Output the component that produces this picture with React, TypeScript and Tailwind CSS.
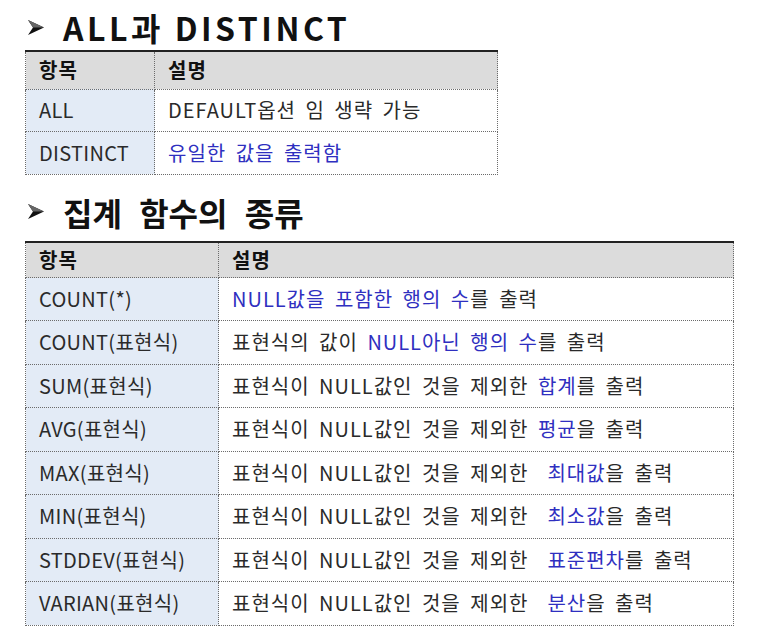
import React from "react";

type Part = { t: string; blue?: boolean };

const font = { fontFamily: '"Noto Sans CJK KR", "Noto Sans", sans-serif' };

function Arrow() {
  return (
    <svg width="18" height="17" viewBox="0 0 18 17" className="shrink-0">
      <path d="M1 1 L17 8.5 L1 16 L6 8.5 Z" fill="#111" />
      <path d="M1 1 L17 8.5 L6 8.5 Z" fill="#666" />
    </svg>
  );
}

function Title({ children, className = "" }: { children: React.ReactNode; className?: string }) {
  return (
    <div className={`flex items-center gap-[18px] pl-[27px] ${className}`}>
      <Arrow />
      <h2 className="text-[32px] font-bold leading-none text-[#111]">{children}</h2>
    </div>
  );
}

function Table({
  rows,
  col1,
  width,
  headerH,
  rowH,
}: {
  rows: { name: string; desc: Part[] }[];
  col1: number;
  width: number;
  headerH: number;
  rowH: number[];
}) {
  const cell = "border border-dotted border-[#6b6b6b] px-[13px] text-left align-middle";
  const head = `${cell} border-t-2 border-t-[#222] [border-top-style:solid] font-bold text-[#111]`;
  return (
    <table
      className="ml-[25px] border-collapse text-[20px] text-[#2a2a2a] tracking-[1px] [word-spacing:4px]"
      style={{ width }}
    >
      <colgroup>
        <col style={{ width: col1 }} />
        <col />
      </colgroup>
      <thead>
        <tr className="bg-[#dcdcdc]" style={{ height: headerH }}>
          <th className={head}>항목</th>
          <th className={head}>설명</th>
        </tr>
      </thead>
      <tbody>
        {rows.map((r, i) => (
          <tr key={r.name} style={{ height: rowH[i] }}>
            <td className={`${cell} bg-[#e3ebf6] tracking-[0.3px]`}>{r.name}</td>
            <td className={`${cell} bg-white whitespace-pre`}>
              {r.desc.map((p, j) => (
                <span key={j} className={p.blue ? "text-[#2f2fc0]" : ""}>
                  {p.t}
                </span>
              ))}
            </td>
          </tr>
        ))}
      </tbody>
    </table>
  );
}

const t1 = [
  { name: "ALL", desc: [{ t: "DEFAULT옵션 임 생략 가능" }] },
  { name: "DISTINCT", desc: [{ t: "유일한 값을 출력함", blue: true }] },
];

const pre = "표현식이 NULL값인 것을 제외한 ";
const t2 = [
  { name: "COUNT(*)", desc: [{ t: "NULL값을 포함한 행의 수", blue: true }, { t: "를 출력" }] },
  { name: "COUNT(표현식)", desc: [{ t: "표현식의 값이 " }, { t: "NULL아닌 행의 수", blue: true }, { t: "를 출력" }] },
  { name: "SUM(표현식)", desc: [{ t: pre }, { t: "합계", blue: true }, { t: "를 출력" }] },
  { name: "AVG(표현식)", desc: [{ t: pre }, { t: "평균", blue: true }, { t: "을 출력" }] },
  { name: "MAX(표현식)", desc: [{ t: pre }, { t: " 최대값", blue: true }, { t: "을 출력" }] },
  { name: "MIN(표현식)", desc: [{ t: pre }, { t: " 최소값", blue: true }, { t: "을 출력" }] },
  { name: "STDDEV(표현식)", desc: [{ t: pre }, { t: " 표준편차", blue: true }, { t: "를 출력" }] },
  { name: "VARIAN(표현식)", desc: [{ t: pre }, { t: " 분산", blue: true }, { t: "을 출력" }] },
];

export default function App() {
  return (
    <div className="w-[778px] h-[632px] bg-white overflow-hidden pt-[11px]" style={font}>
      <Title>
        <span className="tracking-[3.5px]">ALL과 DISTINCT</span>
      </Title>
      <div className="mt-[7px]">
        <Table rows={t1} col1={129} width={473} headerH={38} rowH={[42, 43]} />
      </div>
      <Title className="mt-[21px]">
        <span className="[word-spacing:10px]">집계 함수의 종류</span>
      </Title>
      <div className="mt-[13px]">
        <Table rows={t2} col1={193} width={709} headerH={36} rowH={[43, 43.5, 43.5, 43.5, 43.5, 43.5, 43.5, 43.5]} />
      </div>
    </div>
  );
}
